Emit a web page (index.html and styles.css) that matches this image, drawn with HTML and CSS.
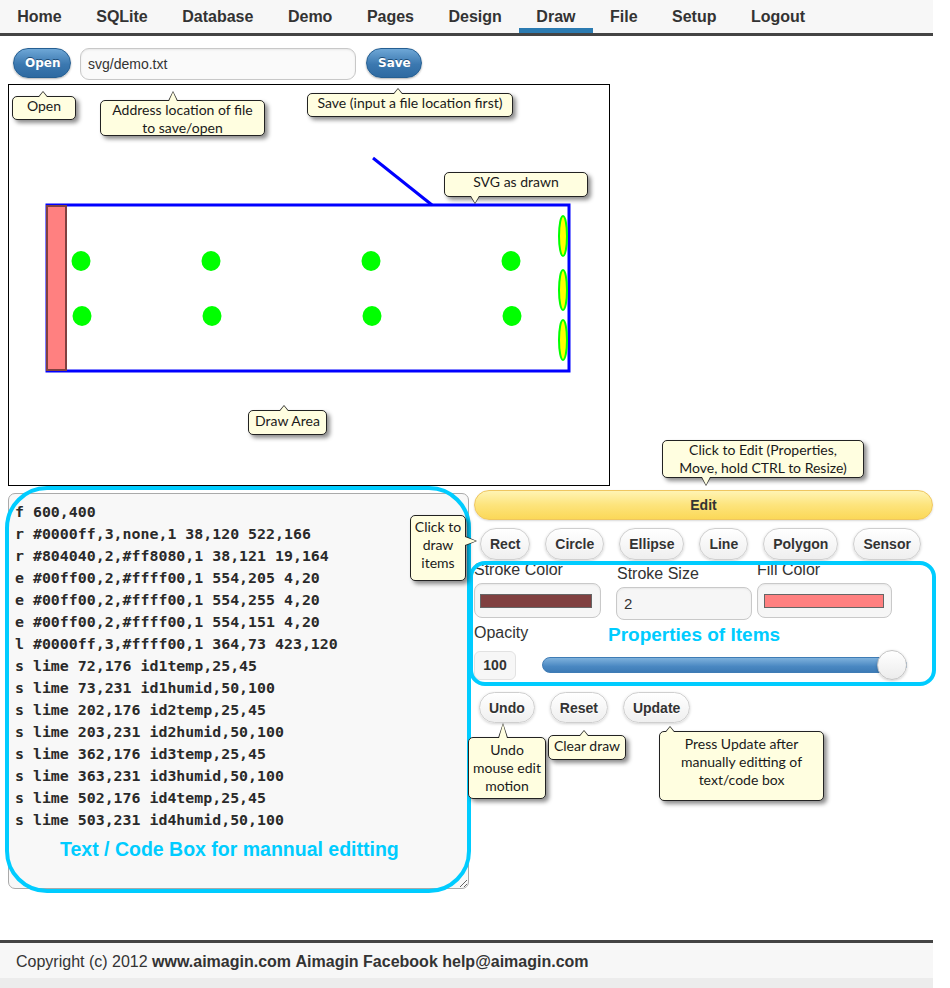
FILE: index.html
```html
<!DOCTYPE html>
<html lang="en">
<head>
<meta charset="utf-8">
<title>Draw</title>
<link rel="stylesheet" href="styles.css">
</head>
<body>
<div class="page">
  <nav class="nav">
    <a class="nav-item">Home</a>
    <a class="nav-item">SQLite</a>
    <a class="nav-item">Database</a>
    <a class="nav-item">Demo</a>
    <a class="nav-item">Pages</a>
    <a class="nav-item">Design</a>
    <a class="nav-item active">Draw</a>
    <a class="nav-item">File</a>
    <a class="nav-item">Setup</a>
    <a class="nav-item">Logout</a>
  </nav>

  <div class="toolbar">
    <button class="btn-blue">Open</button>
    <input class="addr" type="text" value="svg/demo.txt">
    <button class="btn-blue">Save</button>
  </div>

  <div class="draw-area">
    <svg class="canvas" width="600" height="400" viewBox="0 0 600 400">
      <line x1="364" y1="73" x2="423" y2="120" stroke="#0000ff" stroke-width="3"/>
      <rect x="38" y="120" width="522" height="166" fill="none" stroke="#0000ff" stroke-width="3"/>
      <rect x="38" y="121" width="19" height="164" fill="#ff8080" stroke="#804040" stroke-width="2"/>
      <ellipse cx="554" cy="205" rx="4" ry="20" fill="#ffff00" stroke="#00ff00" stroke-width="2"/>
      <ellipse cx="554" cy="255" rx="4" ry="20" fill="#ffff00" stroke="#00ff00" stroke-width="2"/>
      <ellipse cx="554" cy="151" rx="4" ry="20" fill="#ffff00" stroke="#00ff00" stroke-width="2"/>
      <ellipse cx="72" cy="176" rx="9.5" ry="10" fill="#00ff00"/>
      <ellipse cx="73" cy="231" rx="9.5" ry="10" fill="#00ff00"/>
      <ellipse cx="202" cy="176" rx="9.5" ry="10" fill="#00ff00"/>
      <ellipse cx="203" cy="231" rx="9.5" ry="10" fill="#00ff00"/>
      <ellipse cx="362" cy="176" rx="9.5" ry="10" fill="#00ff00"/>
      <ellipse cx="363" cy="231" rx="9.5" ry="10" fill="#00ff00"/>
      <ellipse cx="502" cy="176" rx="9.5" ry="10" fill="#00ff00"/>
      <ellipse cx="503" cy="231" rx="9.5" ry="10" fill="#00ff00"/>
    </svg>
  </div>

  <div class="work">
    <textarea class="code" spellcheck="false">f 600,400
r #0000ff,3,none,1 38,120 522,166
r #804040,2,#ff8080,1 38,121 19,164
e #00ff00,2,#ffff00,1 554,205 4,20
e #00ff00,2,#ffff00,1 554,255 4,20
e #00ff00,2,#ffff00,1 554,151 4,20
l #0000ff,3,#ffff00,1 364,73 423,120
s lime 72,176 id1temp,25,45
s lime 73,231 id1humid,50,100
s lime 202,176 id2temp,25,45
s lime 203,231 id2humid,50,100
s lime 362,176 id3temp,25,45
s lime 363,231 id3humid,50,100
s lime 502,176 id4temp,25,45
s lime 503,231 id4humid,50,100</textarea>

    <div class="side">
      <button class="btn-edit">Edit</button>
      <div class="shapes">
        <button class="btn-gray">Rect</button>
        <button class="btn-gray">Circle</button>
        <button class="btn-gray">Ellipse</button>
        <button class="btn-gray">Line</button>
        <button class="btn-gray">Polygon</button>
        <button class="btn-gray">Sensor</button>
      </div>
      <div class="props">
        <div class="prop-row">
          <div class="field field-stroke">
            <div class="label">Stroke Color</div>
            <div class="box"><span class="swatch swatch-stroke"></span></div>
          </div>
          <div class="field field-size">
            <div class="label">Stroke Size</div>
            <div class="box box-text">2</div>
          </div>
          <div class="field field-fill">
            <div class="label">Fill Color</div>
            <div class="box"><span class="swatch swatch-fill"></span></div>
          </div>
        </div>
        <div class="label label-opacity">Opacity</div>
        <div class="opacity-row">
          <div class="opacity-val">100</div>
          <div class="slider">
            <div class="track"></div>
            <div class="thumb"></div>
          </div>
        </div>
      </div>
      <div class="actions">
        <button class="btn-gray">Undo</button>
        <button class="btn-gray">Reset</button>
        <button class="btn-gray">Update</button>
      </div>
    </div>
  </div>

  <footer class="footer">Copyright (c) 2012 <b>www.aimagin.com</b> <b>Aimagin</b> <b>Facebook</b> <b>help@aimagin.com</b></footer>
  <div class="footer-bottom"></div>

  <!-- annotations -->
  <div class="annot annot-code"></div>
  <div class="annot annot-props"></div>
  <div class="annot-text annot-text-code">Text / Code Box for mannual editting</div>
  <div class="annot-text annot-text-props">Properties of Items</div>

  <div class="tip tip-up tip-open">Open</div>
  <div class="tip tip-up tip-addr">Address location of file<br>to save/open</div>
  <div class="tip tip-up tip-save">Save (input a file location first)</div>
  <div class="tip tip-down tip-svg">SVG as drawn</div>
  <div class="tip tip-up tip-area">Draw Area</div>
  <div class="tip tip-down tip-edit">Click to Edit (Properties,<br>Move, hold CTRL to Resize)</div>
  <div class="tip tip-right tip-items">Click to<br>draw<br>items</div>
  <div class="tip tip-up tip-undo">Undo<br>mouse edit<br>motion</div>
  <div class="tip tip-up tip-clear">Clear draw</div>
  <div class="tip tip-up tip-update">Press Update after<br>manually editting of<br>text/code box</div>
</div>
</body>
</html>
```

FILE: styles.css
```css
* { box-sizing: border-box; }

html, body {
  margin: 0;
  padding: 0;
  background: #ffffff;
}

body {
  font-family: "Liberation Sans", Arial, sans-serif;
  color: #333;
}

.page {
  position: relative;
  width: 933px;
}

/* NAV */
.nav {
  display: flex;
  height: 36px;
  background: #f7f7f7;
  border-bottom: 3px solid #444;
}

.nav-item {
  display: block;
  padding: 0 17.25px;
  line-height: 33px;
  font-size: 16px;
  font-weight: bold;
  color: #333;
  text-decoration: none;
}

.nav-item.active {
  box-shadow: inset 0 -5px 0 #2b7bb1;
}

/* TOOLBAR */
.toolbar {
  display: flex;
  align-items: flex-start;
  margin-top: 12px;
  padding-left: 13px;
  height: 32px;
}

.btn-blue {
  height: 30px;
  padding: 0 11px;
  border: 1px solid #255f92;
  border-radius: 15px;
  background: linear-gradient(#6ea7d6, #3b78b0 55%, #2e6aa1);
  color: #fff;
  font-family: "DejaVu Sans", Verdana, sans-serif;
  font-weight: bold;
  font-size: 12px;
  text-shadow: 0 -1px 0 #1d4c77;
  box-shadow: 0 1px 2px rgba(0,0,0,0.3);
}

.toolbar .btn-blue:first-child { width: 58px; }
.toolbar .btn-blue:last-child { width: 56px; margin-left: 10px; }

.addr {
  width: 276px;
  height: 32px;
  margin-left: 9px;
  padding: 0 7px;
  border: 1px solid #c8c8c8;
  border-radius: 9px;
  background: #fafafa;
  box-shadow: inset 0 1px 2px rgba(0,0,0,0.08);
  font-family: "Liberation Sans", Arial, sans-serif;
  font-size: 14px;
  color: #333;
}

/* DRAW AREA */
.draw-area {
  width: 602px;
  height: 402px;
  margin: 4px 0 0 8px;
  border: 1px solid #000;
  background: #fff;
}

.canvas { display: block; }

/* WORK AREA */
.work {
  display: flex;
  align-items: flex-start;
}

.code {
  display: block;
  width: 461px;
  height: 396px;
  margin: 7px 0 0 8px;
  padding: 7px 6px 6px;
  border: 1px solid #aaa;
  border-radius: 7px;
  background: #f8f8f8;
  font-family: "DejaVu Sans Mono", "Liberation Mono", monospace;
  font-weight: bold;
  font-size: 14.9px;
  line-height: 22px;
  color: #2a2a2a;
  resize: both;
  overflow: hidden;
}

.side {
  width: 459px;
  margin: 4px 0 0 5px;
}

.btn-edit {
  display: block;
  width: 459px;
  height: 30px;
  border: 1px solid #efc660;
  border-radius: 15px;
  background: linear-gradient(#fff4b4, #fde47c 50%, #fbd858);
  font-family: "Liberation Sans", Arial, sans-serif;
  font-weight: bold;
  font-size: 14px;
  color: #333;
  box-shadow: 0 1px 2px rgba(0,0,0,0.15);
}

.btn-gray {
  height: 32px;
  padding: 0 9px;
  border: 1px solid #cfcfcf;
  border-radius: 16px;
  background: linear-gradient(#ffffff, #efefef);
  font-family: "Liberation Sans", Arial, sans-serif;
  font-weight: bold;
  font-size: 14px;
  color: #333;
  text-shadow: 0 1px 0 #fff;
  box-shadow: 0 1px 3px rgba(0,0,0,0.18);
}

.shapes {
  display: flex;
  gap: 15px;
  margin-top: 8px;
  padding-left: 6px;
}

/* PROPERTIES */
.props {
  padding-top: 1px;
}

.prop-row {
  display: flex;
  align-items: flex-start;
}

.label {
  font-size: 16px;
  line-height: 18px;
  color: #333;
}

.field-stroke { width: 127px; }
.field-size { width: 136px; margin-left: 15px; margin-top: 4px; }
.field-fill { width: 135px; margin-left: 5px; }

.field-size .label { margin-left: 1px; }

.box {
  display: flex;
  align-items: center;
  height: 35px;
  margin-top: 4px;
  border: 1px solid #c9c9c9;
  border-radius: 8px;
  background: #f6f6f6;
  box-shadow: inset 0 1px 2px rgba(0,0,0,0.06);
}

.field-size .box { height: 33px; }

.box-text {
  padding-left: 7px;
  font-size: 15px;
  color: #333;
}

.swatch {
  display: block;
  height: 14px;
  border: 1px solid #666;
}

.swatch-stroke {
  width: 112px;
  margin-left: 5px;
  background: #804040;
}

.swatch-fill {
  width: 120px;
  margin-left: 6px;
  background: #ff8080;
}

.label-opacity {
  margin-top: 4px;
}

.opacity-row {
  display: flex;
  align-items: center;
  margin-top: 8px;
  height: 30px;
}

.opacity-val {
  width: 42px;
  height: 29px;
  border: 1px solid #e2e2e2;
  border-radius: 6px;
  background: #f7f7f7;
  font-weight: bold;
  font-size: 14px;
  line-height: 27px;
  text-align: center;
  color: #333;
}

.slider {
  position: relative;
  width: 365px;
  height: 30px;
  margin-left: 26px;
  display: flex;
  align-items: center;
}

.track {
  width: 100%;
  height: 16px;
  border: 1px solid #3f7cb5;
  border-radius: 8px;
  background: linear-gradient(#7eb1dc, #4a88c2 60%, #3d7bb6);
}

.thumb {
  position: absolute;
  right: 0;
  top: 0;
  width: 30px;
  height: 30px;
  border: 1px solid #c4c4c4;
  border-radius: 50%;
  background: linear-gradient(#ffffff, #ececec);
  box-shadow: 0 1px 3px rgba(0,0,0,0.2);
}

.actions {
  display: flex;
  gap: 15px;
  margin-top: 12px;
  padding-left: 5px;
}

.actions .btn-gray { height: 31px; }

/* FOOTER */
.footer {
  margin-top: 51px;
  height: 38px;
  border-top: 3px solid #444;
  background: #f7f7f7;
  padding-left: 16px;
  font-size: 16px;
  line-height: 37px;
  color: #333;
}

.footer b { color: #333; }

.footer-bottom {
  height: 10px;
  background: #ececec;
}

/* ANNOTATIONS */
.annot {
  position: absolute;
  border: 4px solid #00ccff;
  pointer-events: none;
}

.annot-code {
  left: 5px;
  top: 486px;
  width: 466px;
  height: 407px;
  border-radius: 42px;
}

.annot-props {
  left: 469px;
  top: 561px;
  width: 467px;
  height: 125px;
  border-radius: 16px;
}

.annot-text {
  position: absolute;
  font-family: "Liberation Sans", Arial, sans-serif;
  font-weight: bold;
  color: #00ccff;
  white-space: nowrap;
}

.annot-text-code {
  left: 60px;
  top: 838px;
  font-size: 19.5px;
  line-height: 22px;
}

.annot-text-props {
  left: 608px;
  top: 624px;
  font-size: 19px;
  line-height: 22px;
}

/* TOOLTIPS */
.tip {
  position: absolute;
  background: #fffee0;
  border: 1px solid #222;
  border-radius: 5px;
  box-shadow: 3px 3px 4px rgba(0,0,0,0.45);
  font-family: "Lato", "Open Sans", sans-serif;
  font-size: 14px;
  line-height: 18px;
  color: #1a1a1a;
  text-align: center;
  white-space: nowrap;
  --ax: 20px;
  --ah: 7px;
}

.tip::before,
.tip::after {
  content: "";
  position: absolute;
  width: 0;
  height: 0;
  border-style: solid;
  border-color: transparent;
}

.tip-up::before {
  bottom: 100%;
  left: var(--ax);
  margin-left: -5px;
  border-width: 0 5px var(--ah) 5px;
  border-bottom-color: #222;
}

.tip-up::after {
  bottom: 100%;
  left: var(--ax);
  margin-left: -4px;
  border-width: 0 4px calc(var(--ah) - 1px) 4px;
  border-bottom-color: #fffee0;
}

.tip-down::before {
  top: 100%;
  left: var(--ax);
  margin-left: -5px;
  border-width: var(--ah) 5px 0 5px;
  border-top-color: #222;
}

.tip-down::after {
  top: 100%;
  left: var(--ax);
  margin-left: -4px;
  border-width: calc(var(--ah) - 1px) 4px 0 4px;
  border-top-color: #fffee0;
}

.tip-right::before {
  left: 100%;
  top: var(--ax);
  margin-top: -5px;
  border-width: 5px 0 5px var(--ah);
  border-left-color: #222;
}

.tip-right::after {
  left: 100%;
  top: var(--ax);
  margin-top: -4px;
  border-width: 4px 0 4px calc(var(--ah) - 1px);
  border-left-color: #fffee0;
}

.tip-open {
  left: 12px; top: 96px; width: 64px; height: 24px;
  padding-top: 0;
  --ax: 30px; --ah: 6px;
}

.tip-addr {
  left: 100px; top: 100px; width: 165px; height: 36px;
  --ax: 72px; --ah: 10px;
}

.tip-save {
  left: 307px; top: 93px; width: 206px; height: 24px;
  padding-top: 0;
  --ax: 90px; --ah: 6px;
}

.tip-svg {
  left: 444px; top: 172px; width: 144px; height: 25px;
  padding-top: 0;
  --ax: 30px; --ah: 8px;
}

.tip-area {
  left: 248px; top: 410px; width: 79px; height: 25px;
  padding-top: 1px;
  --ax: 35px; --ah: 6px;
}

.tip-edit {
  left: 662px; top: 440px; width: 202px; height: 38px;
  --ax: 43px; --ah: 9px;
}

.tip-items {
  left: 410px; top: 515px; width: 56px; height: 66px;
  padding-top: 2px;
  --ax: 25px; --ah: 12px;
}

.tip-undo {
  left: 468px; top: 737px; width: 78px; height: 62px;
  padding-top: 3px;
  --ax: 34px; --ah: 15px;
}

.tip-clear {
  left: 548px; top: 735px; width: 78px; height: 25px;
  padding-top: 1px;
  --ax: 35px; --ah: 6px;
}

.tip-update {
  left: 659px; top: 731px; width: 165px; height: 70px;
  padding-top: 3px;
  --ax: 10px; --ah: 6px;
}
```
